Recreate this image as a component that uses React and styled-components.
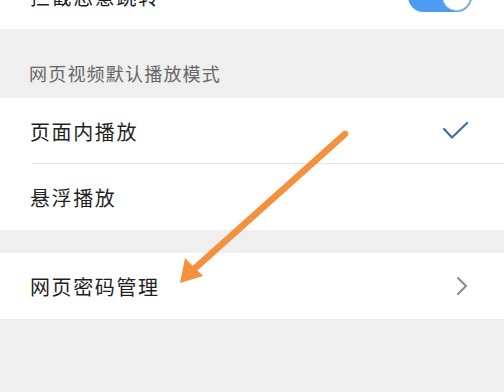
import React from "react";
import styled, { createGlobalStyle } from "styled-components";

const GlobalStyle = createGlobalStyle`
  html, body {
    margin: 0;
    padding: 0;
    background: #efefef;
  }
  body {
    font-family: "Noto Sans CJK SC", "Noto Sans", sans-serif;
  }
`;

const Screen = styled.div`
  position: relative;
  width: 504px;
  height: 392px;
  overflow: hidden;
  background: #efefef;
`;

// content is scrolled a bit, so the first row sits partly above the top edge
const List = styled.div`
  display: flex;
  flex-direction: column;
  margin-top: -37px;
`;

const Group = styled.div`
  background: #ffffff;
  display: flex;
  flex-direction: column;
`;

const Row = styled.div`
  height: 66px;
  display: flex;
  align-items: center;
  justify-content: space-between;
  padding: 0 34px 0 30px;
  position: relative;
  ${({ divider }) =>
    divider &&
    `
    &::after {
      content: "";
      position: absolute;
      left: 32px;
      right: 0;
      bottom: 0;
      height: 1px;
      background: #e6e6e6;
    }
  `}
`;

const Label = styled.span`
  font-size: 20px;
  letter-spacing: 1.6px;
  color: #1f1f1f;
`;

const SectionHeader = styled.div`
  height: 69px;
  box-sizing: border-box;
  padding: 31px 0 0 29px;
  font-size: 18px;
  letter-spacing: 1.2px;
  color: #666666;
`;

const Spacer = styled.div`
  height: ${({ size }) => size}px;
`;

const Toggle = styled.div`
  width: 64px;
  height: 31px;
  border-radius: 16px;
  background: #4d9bf5;
  position: relative;
  margin-right: -2px;
  &::after {
    content: "";
    position: absolute;
    right: 1px;
    top: 1px;
    width: 27px;
    height: 27px;
    border-radius: 50%;
    background: #ffffff;
    border: 1px solid #b9c6d4;
  }
`;

const Check = () => (
  <svg width="28" height="20" viewBox="0 0 28 20">
    <polyline
      points="2,8 10,16.5 25,2"
      fill="none"
      stroke="#3f6ea6"
      strokeWidth="2.2"
      strokeLinecap="round"
      strokeLinejoin="round"
    />
  </svg>
);

const Chevron = () => (
  <svg width="12" height="20" viewBox="0 0 12 20" style={{ marginRight: 2 }}>
    <polyline
      points="2,2 10,10 2,18"
      fill="none"
      stroke="#8a8a8a"
      strokeWidth="2"
      strokeLinecap="round"
      strokeLinejoin="round"
    />
  </svg>
);

const ArrowLayer = styled.svg`
  position: absolute;
  left: 0;
  top: 0;
  pointer-events: none;
`;

const App = () => {
  return (
    <Screen>
      <GlobalStyle />
      <List>
        <Group>
          <Row>
            <Label>拦截恶意跳转</Label>
            <Toggle />
          </Row>
        </Group>
        <SectionHeader>网页视频默认播放模式</SectionHeader>
        <Group>
          <Row divider>
            <Label>页面内播放</Label>
            <Check />
          </Row>
          <Row>
            <Label>悬浮播放</Label>
          </Row>
        </Group>
        <Spacer size={23} />
        <Group>
          <Row>
            <Label>网页密码管理</Label>
            <Chevron />
          </Row>
        </Group>
      </List>
      <ArrowLayer width="504" height="392" viewBox="0 0 504 392">
        <line
          x1="345"
          y1="134"
          x2="193"
          y2="270"
          stroke="#f5913e"
          strokeWidth="6.5"
          strokeLinecap="round"
        />
        <polygon points="180,283 185,258 203,276" fill="#f5913e" />
      </ArrowLayer>
    </Screen>
  );
};

export default App;
